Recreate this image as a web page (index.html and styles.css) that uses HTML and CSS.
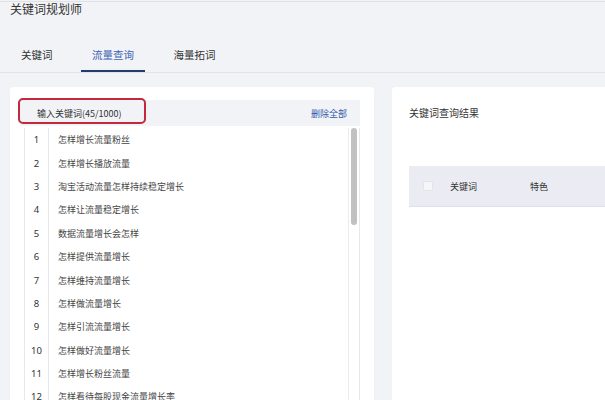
FILE: index.html
```html
<!DOCTYPE html>
<html lang="zh-CN">
<head>
<meta charset="utf-8">
<link rel="stylesheet" href="styles.css">
</head>
<body>
<div class="topline"></div>
<div class="title">关键词规划师</div>
<div class="tabs">
  <div class="tab">关键词</div>
  <div class="tab active">流量查询</div>
  <div class="tab">海量拓词</div>
</div>
<div class="main">
  <div class="card left">
    <div class="input-head">
      <span class="input-label">输入关键词(45/1000)</span>
      <span class="clear">删除全部</span>
      <div class="highlight"></div>
    </div>
    <div class="list">
      <div class="rows">
        <div class="row"><span class="num">1</span><span class="kw">怎样增长流量粉丝</span></div>
        <div class="row"><span class="num">2</span><span class="kw">怎样增长播放流量</span></div>
        <div class="row"><span class="num">3</span><span class="kw">淘宝活动流量怎样持续稳定增长</span></div>
        <div class="row"><span class="num">4</span><span class="kw">怎样让流量稳定增长</span></div>
        <div class="row"><span class="num">5</span><span class="kw">数据流量增长会怎样</span></div>
        <div class="row"><span class="num">6</span><span class="kw">怎样提供流量增长</span></div>
        <div class="row"><span class="num">7</span><span class="kw">怎样维持流量增长</span></div>
        <div class="row"><span class="num">8</span><span class="kw">怎样做流量增长</span></div>
        <div class="row"><span class="num">9</span><span class="kw">怎样引流流量增长</span></div>
        <div class="row"><span class="num">10</span><span class="kw">怎样做好流量增长</span></div>
        <div class="row"><span class="num">11</span><span class="kw">怎样增长粉丝流量</span></div>
        <div class="row"><span class="num">12</span><span class="kw">怎样看待每股现金流量增长率</span></div>
      </div>
      <div class="track"><div class="thumb"></div></div>
    </div>
  </div>
  <div class="card right">
    <div class="result-title">关键词查询结果</div>
    <div class="thead">
      <span class="checkbox"></span>
      <span class="col-kw">关键词</span>
      <span class="col-feat">特色</span>
    </div>
  </div>
</div>
</body>
</html>
```

FILE: styles.css
```css
html, body {
  margin: 0;
  padding: 0;
  height: 100%;
  overflow: hidden;
}
body {
  background: #f2f3f7;
  font-family: "Noto Sans CJK SC", "Noto Sans", "Liberation Sans", sans-serif;
  color: #333;
}
.topline {
  height: 1px;
  margin-top: 1px;
  background: #dfe1e7;
}
.title {
  font-size: 12px;
  line-height: 14px;
  padding-left: 10px;
  color: #333;
}
.tabs {
  display: flex;
  gap: 17.5px;
  margin: 24px 0 0 0;
  padding-left: 10px;
  border-bottom: 1px solid #e1e3e9;
}
.tab {
  height: 30px;
  line-height: 30px;
  padding: 0 11px;
  font-size: 10.5px;
  color: #333;
  border-bottom: 2px solid transparent;
}
.tab.active {
  color: #3a64b4;
  border-bottom-color: #233c6b;
}
.main {
  display: flex;
  gap: 18px;
  padding-left: 10px;
  margin-top: 14px;
  height: 320px;
}
.card {
  background: #fff;
  border-radius: 4px;
}
.left {
  flex: 0 0 364px;
  padding: 13px 0 0 10px;
  box-sizing: border-box;
}
.input-head {
  position: relative;
  width: 340px;
  height: 26px;
  box-sizing: border-box;
  background: #f2f3f7;
  display: flex;
  justify-content: space-between;
  align-items: center;
  padding: 0 13px 0 17px;
  font-size: 9px;
}
.input-label {
  color: #333;
}
.clear {
  color: #2f5aa9;
}
.highlight {
  position: absolute;
  left: -2px;
  top: -2px;
  width: 128px;
  height: 26px;
  box-sizing: border-box;
  border: 2px solid #c3283b;
  border-radius: 5px;
}
.list {
  display: flex;
  margin: 2px 0 0 4px;
  width: 336px;
  box-sizing: border-box;
  border-left: 1px solid #e6e8ee;
  border-right: 1px solid #e6e8ee;
  height: 300px;
}
.rows {
  flex: 1;
}
.row {
  display: flex;
  align-items: center;
  height: 23.4px;
  font-size: 9px;
}
.num {
  width: 23px;
  height: 100%;
  display: flex;
  align-items: center;
  justify-content: center;
  border-right: 1px solid #e6e8ee;
  color: #333;
  font-family: "Noto Sans", "Liberation Sans", sans-serif;
  font-size: 9.5px;
}
.kw {
  padding-left: 9px;
  color: #444;
}
.track {
  width: 11px;
  border-left: 1px solid #ececf0;
  padding-left: 2px;
  box-sizing: border-box;
}
.thumb {
  width: 6px;
  height: 97px;
  border-radius: 3px;
  background: #c1c1c1;
}
.right {
  flex: 0 0 300px;
  padding: 19px 0 0 17px;
  box-sizing: border-box;
}
.result-title {
  font-size: 10px;
  line-height: 14px;
  color: #333;
}
.thead {
  margin-top: 46px;
  height: 41px;
  background: #ebecf3;
  border-bottom: 1px solid #dfe0e8;
  box-sizing: border-box;
  display: flex;
  align-items: center;
  padding-left: 14px;
  font-size: 9px;
  color: #333;
}
.checkbox {
  width: 10px;
  height: 10px;
  box-sizing: border-box;
  background: #f6f6f9;
  border: 1px solid #e3e4ea;
  border-radius: 2px;
  margin-right: 17px;
}
.col-kw {
  width: 80px;
}
```
